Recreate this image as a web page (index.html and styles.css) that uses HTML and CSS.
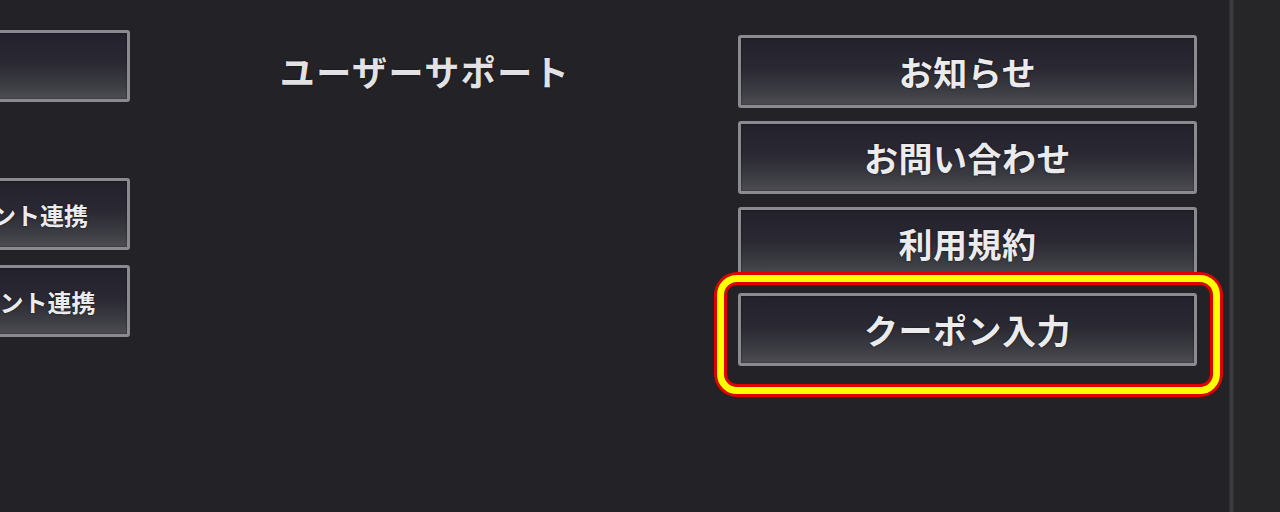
FILE: index.html
```html
<!DOCTYPE html>
<html lang="ja">
<head>
<meta charset="utf-8">
<title>ユーザーサポート</title>
<link rel="stylesheet" href="styles.css">
</head>
<body>
<div class="screen">
  <main class="main">
    <section class="col-left">
      <div class="btn btn-sm"></div>
      <div class="btn btn-sm btn-gap">Appleアカウント連携</div>
      <div class="btn btn-sm">Googleアカウント連携</div>
    </section>
    <section class="col-mid">
      <h2 class="heading">ユーザーサポート</h2>
    </section>
    <section class="col-right">
      <div class="btn btn-lg">お知らせ</div>
      <div class="btn btn-lg">お問い合わせ</div>
      <div class="btn btn-lg">利用規約</div>
      <div class="btn btn-lg btn-focus">クーポン入力<span class="highlight"></span></div>
    </section>
  </main>
  <div class="divider"></div>
  <aside class="side"></aside>
</div>
</body>
</html>
```

FILE: styles.css
```css
html, body {
  margin: 0;
  padding: 0;
  height: 100%;
  background: #232226;
  font-family: "Noto Sans CJK JP", "Noto Sans", sans-serif;
  overflow: hidden;
}

.screen {
  display: flex;
  height: 512px;
  width: 1280px;
}

.main {
  width: 1229px;
  flex: none;
  display: flex;
  align-items: flex-start;
  overflow: hidden;
}

.col-left {
  flex: none;
  width: 320px;
  margin-left: -190px;
  margin-top: 30px;
  display: flex;
  flex-direction: column;
  gap: 15px;
}

.col-mid {
  flex: none;
  width: 590px;
  margin-right: 18px;
  margin-top: 34px;
  height: 73px;
  display: flex;
  align-items: center;
  justify-content: center;
}

.heading {
  margin: 0;
  font-size: 35px;
  font-weight: 700;
  letter-spacing: 1.5px;
  color: #e2e2e4;
  text-shadow: 0 0 2px rgba(0, 0, 0, 0.7);
  line-height: 1;
}

.col-right {
  flex: none;
  width: 459px;
  margin-top: 35px;
  display: flex;
  flex-direction: column;
  gap: 13px;
}

.btn {
  box-sizing: border-box;
  border: 3px solid #8a8a91;
  border-radius: 3px;
  background: linear-gradient(to bottom, #23222c 0%, #2a2933 45%, #3d3d44 80%, #4d4d53 100%);
  color: #ebebed;
  font-weight: 700;
  display: flex;
  align-items: center;
  justify-content: center;
  white-space: nowrap;
  text-shadow: 0 0 2px rgba(0, 0, 0, 0.8);
  box-shadow: inset 0 0 2px rgba(0, 0, 0, 0.6);
}

.btn-sm {
  height: 72px;
  font-size: 24px;
}

.btn-gap {
  margin-top: 61px;
}

.btn-lg {
  height: 73px;
  font-size: 34px;
  letter-spacing: 0.5px;
}

.btn-focus {
  position: relative;
}

.highlight {
  position: absolute;
  left: -24px;
  top: -21px;
  width: 503px;
  height: 119px;
  box-sizing: border-box;
  border: 7px solid #ffff00;
  border-radius: 20px;
  box-shadow: 0 0 0 3px #e00000, inset 0 0 0 3px #e00000;
  pointer-events: none;
}

.divider {
  flex: none;
  width: 5px;
  background: linear-gradient(to right, #2f2f33, #3e3e43 50%, #2f2f33);
}

.side {
  flex: 1;
  background: #262629;
}
```
